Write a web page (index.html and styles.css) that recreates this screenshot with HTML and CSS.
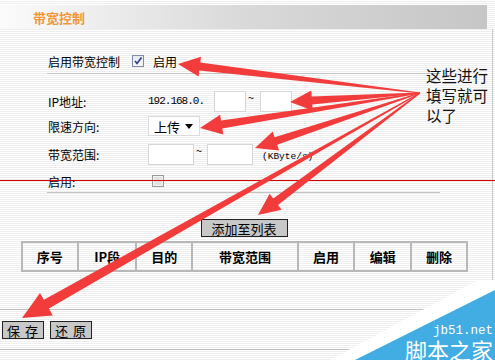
FILE: index.html
```html
<!DOCTYPE html>
<html lang="zh-CN">
<head>
  <meta charset="utf-8">
  <title>带宽控制</title>
  <link rel="stylesheet" href="styles.css">
</head>
<body>
  <div class="page">
    <div class="header"><span class="title">带宽控制</span></div>

    <div class="main">
      <div class="form">
        <div class="row row-first">
          <span>启用带宽控制</span>
          <span class="check checked">
            <svg width="12" height="12" viewBox="0 0 12 12"><path d="M3 6 L5 8.5 L9.5 2.5" fill="none" stroke="#2b3f86" stroke-width="1.6"/></svg>
          </span>
          <span class="check-label">启用</span>
        </div>
        <div class="row row-ip">
          <span class="label">IP地址:</span>
          <span class="ip-prefix">192.168.0.</span>
          <input class="field ip-field" type="text">
          <span class="tilde">~</span>
          <input class="field ip-field" type="text">
        </div>
        <div class="row row-dir">
          <span class="label">限速方向:</span>
          <span class="select">上传<span class="caret"></span></span>
        </div>
        <div class="row row-range">
          <span class="label">带宽范围:</span>
          <input class="field range-field" type="text">
          <span class="tilde">~</span>
          <input class="field range-field" type="text">
          <span class="unit">(KByte/s)</span>
        </div>
        <div class="row row-enable">
          <span class="label">启用:</span>
          <span class="check disabled"></span>
        </div>
      </div>

      <div class="list">
        <div class="add-wrap"><button class="btn add-btn">添加至列表</button></div>
        <table class="rules">
          <tr>
            <th class="c-no">序号</th>
            <th class="c-ip">IP段</th>
            <th class="c-dst">目的</th>
            <th class="c-bw">带宽范围</th>
            <th class="c-on">启用</th>
            <th class="c-edit">编辑</th>
            <th class="c-del">删除</th>
          </tr>
        </table>
      </div>
    </div>

    <div class="footer">
      <button class="btn foot-btn">保 存</button>
      <button class="btn foot-btn">还 原</button>
    </div>

    <!-- annotation drawn over the screenshot -->
    <svg class="marks" width="495" height="360" viewBox="0 0 495 360">
      <line x1="0" y1="180.5" x2="495" y2="180.5" stroke="#d40000" stroke-width="1"/>
      <g fill="#f23c3c">
        <polygon points="420.1,92.5 200.3,62.6 201,56.7 178,64 198.6,76.5 199.3,70.6 419.9,93.5"/>
        <polygon points="420,92.5 311.7,96.5 311.3,90.5 290,102 312.7,110.5 312.3,104.5 420,93.5"/>
        <polygon points="419.9,92.5 221.1,120.6 220.1,114.7 200,128 223.3,134.4 222.3,128.5 420.1,93.5"/>
        <polygon points="419.8,92.5 274.6,137.2 272.7,131.5 255,148 279.1,150.5 277.2,144.8 420.2,93.5"/>
        <polygon points="419.7,92.6 273.2,198.6 269.6,193.8 258,215 281.6,209.8 278,205 420.3,93.4"/>
        <polygon points="419.75,92.56 43.9,299.8 40,292.9 22,318 52.8,315.5 48.9,308.6 420.25,93.44"/>
      </g>
      <polygon points="330,360 478,280 495,280 495,290 355,360" fill="#fff"/>
      <polygon points="495,290 495,360 355,360" fill="#41ade2"/>
    </svg>

    <div class="note">这些进行填写就可以了</div>

    <div class="stamp">
      <span class="stamp-url">jb51.net</span>
      <span class="stamp-name">脚本之家</span>
    </div>
  </div>
</body>
</html>
```

FILE: styles.css
```css
* {
  box-sizing: border-box;
}
body {
  margin: 0;
  font-family: "Noto Sans CJK SC", sans-serif;
  font-size: 12px;
  color: #000;
}
.page {
  position: relative;
  width: 495px;
  height: 360px;
  overflow: hidden;
  background: repeating-linear-gradient(to bottom, #fff 0 1px, #eeeeee 1px 2px);
}
.header {
  margin-top: 5px;
  width: 487px;
  height: 24px;
  padding-left: 33px;
  display: flex;
  align-items: center;
  background: linear-gradient(to right, #fbfbfb, #d9d9d9 50%, #c6c6c6);
}
.title {
  color: #f0983a;
  font-weight: bold;
  font-size: 13px;
}
.main {
  width: 493px;
  height: 270px;
  padding-top: 21px;
  border-right: 1px solid #c8c8c8;
}
.form {
  margin-left: 47px;
  width: 393px;
}
.row {
  display: flex;
  align-items: center;
  height: 22px;
  padding-left: 1px;
}
.row-first {
  height: 24px;
  border-bottom: 1px solid #c4c4c4;
  padding-bottom: 1px;
}
.row-ip {
  margin-top: 16px;
}
.row-dir {
  margin-top: 3px;
}
.row-range {
  margin-top: 6px;
}
.row-enable {
  margin-top: 5px;
  height: 23px;
  border-bottom: 1px solid #c4c4c4;
}
.label {
  width: 100px;
}
.check {
  width: 12px;
  height: 12px;
  display: flex;
}
.checked {
  margin-left: 12px;
  border: 1px solid #7e8ca8;
  background: linear-gradient(#e4e8f0, #f8f9fb);
}
.checked svg {
  margin: -1px;
}
.check-label {
  margin-left: 9px;
}
.disabled {
  margin-left: 4px;
  border: 1px solid #9a9a9a;
  background: #e2e2e2;
  box-shadow: inset 0 0 0 1px #f4f4f4;
}
.ip-prefix {
  font-family: "Liberation Mono", monospace;
  font-size: 11px;
  letter-spacing: -1px;
  width: 66px;
}
.field {
  height: 21px;
  border: 1px solid #d6d6d6;
  background: #fff;
  padding: 0;
  margin: 0;
}
.ip-field {
  width: 32px;
}
.range-field {
  width: 46px;
}
.tilde {
  width: 14px;
  align-self: flex-start;
  padding-left: 2px;
  font-size: 11px;
  line-height: 14px;
}
.row-range .tilde {
  width: 13px;
}
.unit {
  margin-left: 9px;
  padding-top: 5px;
  font-family: "Liberation Mono", monospace;
  font-size: 9.5px;
}
.select {
  width: 52px;
  height: 20px;
  border: 1px solid #dcdcdc;
  background: #fff;
  display: flex;
  align-items: center;
  justify-content: space-between;
  padding: 0 6px 0 5px;
  font-size: 13px;
}
.caret {
  border-left: 4px solid transparent;
  border-right: 4px solid transparent;
  border-top: 5px solid #000;
}
.list {
  margin-left: 21px;
  width: 446px;
}
.add-wrap {
  display: flex;
  justify-content: center;
  margin-top: 26px;
}
.btn {
  background: #c8c8c8;
  border: 1px solid #222;
  border-radius: 0;
  height: 18px;
  padding: 0;
  font-family: "Noto Sans CJK SC", sans-serif;
  font-size: 13px;
  line-height: 15px;
  color: #000;
}
.add-btn {
  width: 87px;
}
.rules {
  margin-top: 4px;
  width: 447px;
  height: 31px;
  border-collapse: collapse;
  border: 2px solid;
  border-color: #c4c4c4 #a4a4a4 #a4a4a4 #c4c4c4;
}
.rules th {
  border: 2px solid #b8b8b8;
  font-size: 13px;
  font-weight: bold;
  padding: 0;
}
.c-no, .c-dst, .c-del {
  width: 56px;
}
.c-ip {
  width: 59px;
}
.c-bw {
  width: 106px;
}
.c-on, .c-edit {
  width: 57px;
}
.footer {
  margin-top: 10px;
  width: 495px;
  padding: 11px 0 10px 2px;
  border-top: 1px solid #c0c0c0;
  border-bottom: 1px solid #c0c0c0;
  display: flex;
  gap: 6px;
}
.foot-btn {
  width: 42px;
  letter-spacing: 1px;
}
.marks {
  position: absolute;
  top: 0;
  left: 0;
  pointer-events: none;
}
.note {
  position: absolute;
  left: 426px;
  top: 65px;
  width: 66px;
  font-size: 15.5px;
  line-height: 20px;
  color: #111;
}
.stamp {
  position: absolute;
  right: 2px;
  bottom: 0;
  display: flex;
  flex-direction: column;
  align-items: flex-end;
  color: #fff;
}
.stamp-url {
  font-family: "Liberation Mono", monospace;
  font-size: 12.5px;
  line-height: 13px;
}
.stamp-name {
  font-size: 22px;
  line-height: 22px;
}
```
